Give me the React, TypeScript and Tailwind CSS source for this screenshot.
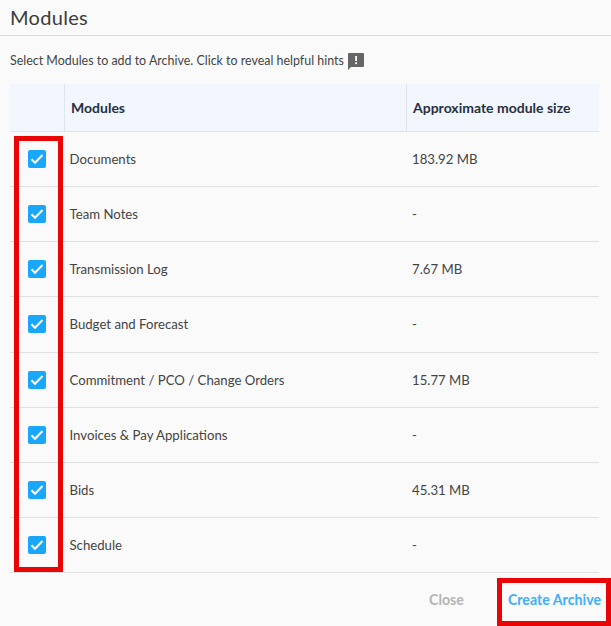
import React from "react";

const rows: [string, string][] = [
  ["Documents", "183.92 MB"],
  ["Team Notes", "-"],
  ["Transmission Log", "7.67 MB"],
  ["Budget and Forecast", "-"],
  ["Commitment / PCO / Change Orders", "15.77 MB"],
  ["Invoices & Pay Applications", "-"],
  ["Bids", "45.31 MB"],
  ["Schedule", "-"],
];

function Check() {
  return (
    <span className="flex h-[18px] w-[18px] items-center justify-center rounded-[2px] bg-[#18a7fb]">
      <svg width="18" height="18" viewBox="0 0 18 18" fill="none">
        <path d="M3.5 9.300 L7 12.800 L14.500 5" stroke="#fff" strokeWidth="2" />
      </svg>
    </span>
  );
}

export default function App() {
  return (
    <div className="relative h-[626px] w-[611px] overflow-hidden bg-[#fafafa] font-['Lato','Noto_Sans',sans-serif] text-[#444]">
      <div className="flex h-9 items-center border-b border-[#ddd] pb-[2px] pl-[10px] text-[20px] leading-none tracking-[0.3px] text-[#3c3c3c]">
        Modules
      </div>
      <div className="flex h-[48px] items-center gap-[3px] pl-[10px] pt-[2px] text-[12.45px] text-[#444]">
        <span>Select Modules to add to Archive. Click to reveal helpful hints</span>
        <svg width="18" height="18" viewBox="0 0 18 18">
          <path d="M2 1h14a1 1 0 0 1 1 1v12a1 1 0 0 1-1 1H4L1 18V2a1 1 0 0 1 1-1z" fill="#666" />
          <rect x="8.200" y="4" width="1.800" height="5" fill="#fff" />
          <rect x="8.200" y="10.300" width="1.800" height="1.800" fill="#fff" />
        </svg>
      </div>
      <div className="mx-[10px] w-[589px]">
        <div className="flex h-[48px] border-b border-[#dfe3ea] bg-[#f2f7ff] text-[14px] font-bold text-[#26303f]">
          <div className="w-[55px] border-r border-[#dfe3ea]" />
          <div className="flex w-[342px] items-center border-r border-[#dfe3ea] pl-[6px]">Modules</div>
          <div className="flex flex-1 items-center pl-[6px]">Approximate module size</div>
        </div>
        {rows.map(([name, size]) => (
          <div key={name} className="flex h-[55.14px] items-center border-b border-[#e0e0e0] text-[13.2px]">
            <div className="flex w-[54px] justify-center">
              <Check />
            </div>
            <div className="w-[348px] pl-[5.5px] pt-[1.8px]">{name}</div>
            <div className="flex-1 pt-[1.8px]">{size}</div>
          </div>
        ))}
      </div>
      <div className="flex h-[53px] items-center text-[14.2px] font-bold">
        <span className="ml-[429px] text-[#b5b5b5]">Close</span>
        <span className="ml-[44px] text-[#41aefb]">Create Archive</span>
      </div>
      <div className="absolute left-[14px] top-[136px] h-[436px] w-[49px] border-[5px] border-[#e90505]" />
      <div className="absolute left-[497px] top-[578px] h-[48px] w-[114px] border-[5px] border-[#e90505]" />
    </div>
  );
}
